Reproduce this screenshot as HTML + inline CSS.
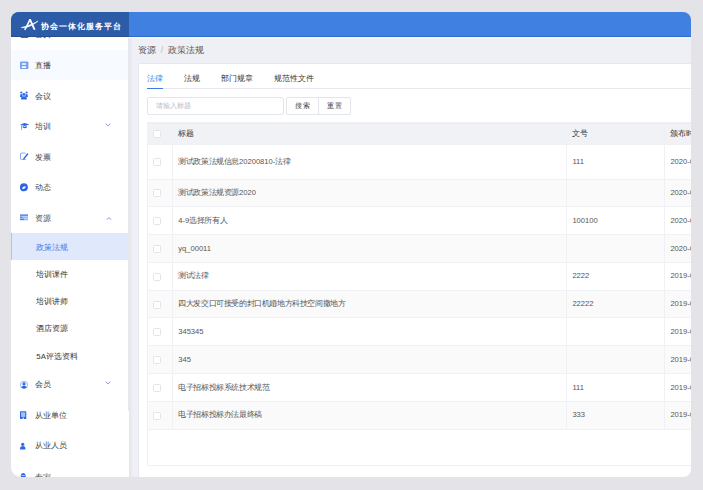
<!DOCTYPE html>
<html><head><meta charset="utf-8">
<style>
*{box-sizing:border-box;margin:0;padding:0}
html,body{width:703px;height:490px;overflow:hidden;background:#e4e3e8;font-family:"Liberation Sans",sans-serif;}
#win{position:absolute;left:0;top:0;width:703px;height:490px;clip-path:inset(12px 12px 13px 11px round 8px 8px 8px 10px);background:#eff0f5;}
#hdr{position:absolute;left:11px;top:12px;width:680px;height:25px;background:#4080e0;box-shadow:inset 0 -1px 0 #2e6ad6;}
#hdrl{position:absolute;left:11px;top:12px;width:118px;height:25px;background:#2c5ba8;box-shadow:inset 0 -1px 0 #24508f;}
#logo{position:absolute;left:10px;top:6px;width:16px;height:13px}
#title{position:absolute;left:30px;top:1.2px;line-height:27px;font-size:8.4px;letter-spacing:1.0px;color:#fff;font-weight:bold;white-space:nowrap}
#side{position:absolute;left:11px;top:37px;width:118px;height:440px;background:#fff;overflow:hidden}
#side .ic{position:absolute;left:9px;width:10px;height:9px;line-height:0}
#side .ic svg{display:block}
#side .tx{position:absolute;left:24.2px;height:14px;line-height:14px;font-size:7.8px;color:#444;white-space:nowrap}
#side .sub{left:25.3px}
#side .ch{position:absolute;left:94px;width:6px;height:4px}
#bc{position:absolute;left:138px;top:43px;font-size:8.5px;color:#555;line-height:14px;white-space:nowrap}
#card{position:absolute;left:138.7px;top:63px;width:600px;height:460px;background:#fff;border-radius:2px}
.tab{position:absolute;top:10px;font-size:8px;line-height:12px;color:#333;white-space:nowrap}
#tabline{position:absolute;left:8.3px;top:25px;width:600px;height:1px;background:#e8e8ee}
#tabact{position:absolute;left:8.3px;top:24.5px;width:16px;height:1.5px;background:#3d7ae6}
#inp{position:absolute;left:8.4px;top:33.9px;width:136.8px;height:18px;border:1px solid #e3e5ea;border-radius:2px;font-size:7.2px;color:#b8bcc4;line-height:15.6px;padding-left:8px}
.btn{position:absolute;top:33.9px;width:32.5px;height:18px;border:1px solid #e3e5ea;font-size:7px;color:#444;line-height:16px;text-align:center;letter-spacing:1px;padding-left:1px}
.tr{position:absolute;left:8.3px;width:600px;border-bottom:1px solid #f0f1f5}
.th{background:#f1f2f6}
.vl{position:absolute;width:1px;background:#f0f1f5}
.td{position:absolute;height:12px;line-height:12px;font-size:7.6px;color:#555;white-space:nowrap}
.hd{color:#333}
.cj{letter-spacing:-0.4px}
.cb{position:absolute;width:8px;height:8px;border:1px solid #e2e4ea;border-radius:1.5px;background:#fff}
#tblbot{position:absolute;left:8.3px;top:366px;width:600px;height:36.8px;border:1px solid #f0f1f5;border-top:none}
#tblleft{position:absolute;left:8.3px;top:59px;width:1px;height:343px;background:#f0f1f5}
</style></head><body>
<div id="win">
  <div id="hdr"></div>
  <div id="hdrl">
    <svg style="position:absolute;left:0;top:0" width="118" height="25" viewBox="0 0 118 25"><path d="M17.9 7.0 L19.8 7.0 L24.6 17.7 L22.6 17.7 Z" fill="#fff"/><path d="M18.9 7.6 Q16.8 12.6 13.7 17.8" stroke="#fff" stroke-width="1.5" fill="none"/><path d="M10.2 15.5 C 15 16.2, 21 14.3, 27.1 9.0 C 21.5 12.2, 15.5 14.4, 10.2 15.5 Z" stroke="#fff" stroke-width="0.6" fill="#fff" stroke-linejoin="round"/></svg>
    <div id="title">协会一体化服务平台</div>
  </div>
  <div id="side">
<div style="position:absolute;left:0;top:12.50px;width:116.5px;height:30.7px;background:#f7faff"></div>
<div class="ic" style="top:-7.60px"><svg width="9" height="9" viewBox="0 0 9 9"><rect x="0.5" y="0" width="8" height="9" rx="1" fill="#2f66e6"/></svg></div>
<div class="tx" style="top:-9.10px">首页</div>
<div class="ic" style="top:23.70px"><svg width="9" height="9" viewBox="0 0 9 9"><rect x="0" y="0.4" width="8.4" height="7.7" rx="1.2" fill="#76a0f0"/><rect x="1.8" y="2.2" width="4.3" height="1.6" rx="0.3" fill="#fff"/><rect x="1.8" y="5.3" width="4.3" height="1.6" rx="0.3" fill="#fff"/></svg></div>
<div class="tx" style="top:22.20px">直播</div>
<div class="ic" style="top:54.20px"><svg width="9" height="9" viewBox="0 0 9 9"><circle cx="1.3" cy="1.5" r="1.1" fill="#2f66e6"/><circle cx="6.6" cy="1.5" r="1.1" fill="#2f66e6"/><circle cx="3.95" cy="3.4" r="1.45" fill="#2f66e6"/><path d="M0 5.4 Q0 3.1 1.3 3.1 Q2.6 3.1 2.6 4.9 V5.9 H0Z M7.9 5.4 Q7.9 3.1 6.6 3.1 Q5.3 3.1 5.3 4.9 V5.9 H7.9Z" fill="#2f66e6"/><path d="M1.1 8.4 V6.8 Q1.1 5.3 3.95 5.3 Q6.8 5.3 6.8 6.8 V8.4Z" fill="#2f66e6"/></svg></div>
<div class="tx" style="top:52.70px">会议</div>
<div class="ic" style="top:84.70px"><svg width="10" height="9" viewBox="0 0 10 9"><path d="M0.1 2.5 L4.7 0.9 L9.3 2.5 L4.7 3.9Z" fill="#2f66e6"/><path d="M2.6 4.1 Q4.8 5.4 7.0 4.1 V5.3 Q4.8 7.0 2.6 5.3Z" fill="#2f66e6"/><path d="M1.6 2.6 V8.1" stroke="#6d98ef" stroke-width="0.85"/></svg></div>
<div class="tx" style="top:83.20px">培训</div>
<div class="ch" style="top:86.30px;left:94px"><svg width="6" height="3.5" viewBox="0 0 5.5 3" style="display:block"><path d="M0.5 0.5 L2.7 2.5 L4.9 0.5" stroke="#8895ee" stroke-width="0.9" fill="none"/></svg></div>
<div class="ic" style="top:115.20px"><svg width="9" height="9" viewBox="0 0 9 9"><path d="M5.6 1.1 H1.3 Q0.5 1.1 0.5 1.9 V6.7 Q0.5 7.5 1.3 7.5 H5.8" stroke="#7a9ff0" stroke-width="0.9" fill="none"/><path d="M3.9 6.6 L7.6 2.0" stroke="#2f66e6" stroke-width="1.5" stroke-linecap="round"/></svg></div>
<div class="tx" style="top:113.70px">发票</div>
<div class="ic" style="top:145.70px"><svg width="9" height="9" viewBox="0 0 9 9"><circle cx="3.9" cy="4.3" r="3.95" fill="#2f66e6"/><ellipse cx="3.95" cy="4.6" rx="1.9" ry="0.95" transform="rotate(-30 3.95 4.6)" fill="#fff"/></svg></div>
<div class="tx" style="top:144.20px">动态</div>
<div class="ic" style="top:176.20px"><svg width="9" height="9" viewBox="0 0 9 9"><rect x="0" y="0.8" width="8" height="7.2" fill="#dde8fc"/><rect x="0" y="1.6" width="8" height="1.1" fill="#2f66e6"/><rect x="0" y="3.6" width="2.6" height="1.1" fill="#2f66e6"/><rect x="2.6" y="3.6" width="5.4" height="1.1" fill="#86aaf3"/><rect x="0" y="5.6" width="4" height="1.2" fill="#2f66e6"/><rect x="4" y="5.6" width="4" height="1.2" fill="#86aaf3"/></svg></div>
<div class="tx" style="top:174.70px">资源</div>
<div class="ch" style="top:179.50px;left:94.8px"><svg width="6" height="3.5" viewBox="0 0 5.5 3" style="display:block"><path d="M0.5 2.5 L2.7 0.5 L4.9 2.5" stroke="#8895ee" stroke-width="0.9" fill="none"/></svg></div>
<div class="ic" style="top:342.75px"><svg width="9" height="9" viewBox="0 0 9 9"><circle cx="4" cy="4.95" r="3.6" fill="none" stroke="#7a9cf0" stroke-width="0.75"/><circle cx="4" cy="3.9" r="1.55" fill="#2f66e6"/><path d="M1.1 7.2 Q1.8 5.7 4 5.7 Q6.2 5.7 6.9 7.2 Q4 9.9 1.1 7.2Z" fill="#2f66e6"/></svg></div>
<div class="tx" style="top:341.25px">会员</div>
<div class="ch" style="top:344.35px;left:94px"><svg width="6" height="3.5" viewBox="0 0 5.5 3" style="display:block"><path d="M0.5 0.5 L2.7 2.5 L4.9 0.5" stroke="#8895ee" stroke-width="0.9" fill="none"/></svg></div>
<div class="ic" style="top:373.25px"><svg width="9" height="9" viewBox="0 0 9 9"><rect x="0" y="1.2" width="6.3" height="7.7" rx="0.6" fill="#2f66e6"/><rect x="1.1" y="2.3" width="4.1" height="4.6" fill="#a9c2f5"/><rect x="2.6" y="7.6" width="1.2" height="1.3" fill="#fff"/></svg></div>
<div class="tx" style="top:371.75px">从业单位</div>
<div class="ic" style="top:403.75px"><svg width="9" height="9" viewBox="0 0 9 9"><circle cx="2.75" cy="3.35" r="1.55" fill="#2f66e6"/><path d="M0.1 8.4 V7.1 Q0.1 5.0 2.75 5.0 Q5.4 5.0 5.4 7.1 V8.4Z" fill="#2f66e6"/></svg></div>
<div class="tx" style="top:402.25px">从业人员</div>
<div class="ic" style="top:435.00px"><svg width="9" height="9" viewBox="0 0 9 9"><path d="M0.8 9 V3.4 Q0.8 0.9 3.2 0.9 Q5.6 0.9 5.6 3.4 V9Z" fill="#2f66e6"/><rect x="1.6" y="3.2" width="3.2" height="0.8" fill="#fff" opacity="0.8"/></svg></div>
<div class="tx" style="top:433.50px">专家</div>
<div style="position:absolute;left:0;top:196.00px;width:117.7px;height:27.2px;background:#dfe9fb;border-left:1px solid #a8c4f4"></div>
<div class="tx sub" style="top:203.80px;color:#3f77e3">政策法规</div>
<div class="tx sub" style="top:231.00px;color:#333">培训课件</div>
<div class="tx sub" style="top:258.20px;color:#333">培训讲师</div>
<div class="tx sub" style="top:285.40px;color:#333">酒店资源</div>
<div class="tx sub" style="top:312.60px;color:#333">5A评选资料</div>
  </div>
  <div style="position:absolute;left:129px;top:37px;width:4px;height:440px;background:linear-gradient(to right,#e3e4ea,#eff0f5)"></div>
  <div style="position:absolute;left:128px;top:38px;width:1px;height:373px;background:#e8e9ef"></div>
  <div style="position:absolute;left:129px;top:37px;width:562px;height:2px;background:linear-gradient(#fafaf7,#f3f3f5)"></div>
  <div id="bc">资源 &nbsp;<span style="color:#b8bbc2">/</span>&nbsp; 政策法规</div>
  <div style="position:absolute;left:138px;top:63px;width:1px;height:420px;background:#e7e7ed"></div>
  <div id="card">
    <div style="position:absolute;left:-1px;top:0;width:600px;height:1px;background:#e7e7ed"></div>
    <div id="tabline"></div>
    <div id="tabact"></div>
    <div class="tab" style="left:8.1px;color:#3d7ae6">法律</div>
    <div class="tab" style="left:45.3px">法规</div>
    <div class="tab" style="left:82.3px">部门规章</div>
    <div class="tab" style="left:135.1px">规范性文件</div>
    <div id="inp">请输入标题</div>
    <div class="btn" style="left:147.7px;border-radius:2px 0 0 2px">搜索</div>
    <div class="btn" style="left:179.6px;border-radius:0 2px 2px 0">重置</div>
<div class="tr th" style="top:59.00px;height:22.50px"></div>
<div style="position:absolute;left:8.3px;top:60.0px;width:600px;height:1px;background:#ebecf1"></div>
<div class="cb" style="left:14.50px;top:66.75px"></div>
<div class="td hd" style="left:39.50px;top:65.05px"><span class="cj">标题</span></div>
<div class="td hd" style="left:433.70px;top:65.05px"><span class="cj">文号</span></div>
<div class="td hd" style="left:531.70px;top:65.05px"><span class="cj">颁布时间</span></div>
<div class="tr" style="top:82.00px;height:34.50px;background:#fff"></div>
<div class="cb" style="left:14.50px;top:95.25px"></div>
<div class="td" style="left:39.50px;top:92.95px"><span class="cj">测试政策法规信息</span>20200810-<span class="cj">法律</span></div>
<div class="td" style="left:433.70px;top:92.95px">111</div>
<div class="td" style="left:531.70px;top:92.95px">2020-0</div>
<div class="tr" style="top:116.50px;height:27.78px;background:#fafafa"></div>
<div class="cb" style="left:14.50px;top:126.39px"></div>
<div class="td" style="left:39.50px;top:124.09px"><span class="cj">测试政策法规资源</span>2020</div>
<div class="td" style="left:531.70px;top:124.09px">2020-0</div>
<div class="tr" style="top:144.28px;height:27.78px;background:#fff"></div>
<div class="cb" style="left:14.50px;top:154.17px"></div>
<div class="td" style="left:39.50px;top:151.87px">4-9<span class="cj">选择所有人</span></div>
<div class="td" style="left:433.70px;top:151.87px">100100</div>
<div class="td" style="left:531.70px;top:151.87px">2020-0</div>
<div class="tr" style="top:172.06px;height:27.78px;background:#fafafa"></div>
<div class="cb" style="left:14.50px;top:181.95px"></div>
<div class="td" style="left:39.50px;top:179.65px">yq_00011</div>
<div class="td" style="left:531.70px;top:179.65px">2020-0</div>
<div class="tr" style="top:199.84px;height:27.78px;background:#fff"></div>
<div class="cb" style="left:14.50px;top:209.73px"></div>
<div class="td" style="left:39.50px;top:207.43px"><span class="cj">测试法律</span></div>
<div class="td" style="left:433.70px;top:207.43px">2222</div>
<div class="td" style="left:531.70px;top:207.43px">2019-0</div>
<div class="tr" style="top:227.62px;height:27.78px;background:#fafafa"></div>
<div class="cb" style="left:14.50px;top:237.51px"></div>
<div class="td" style="left:39.50px;top:235.21px"><span class="cj">四大发交口可接受的封口机婚地方科技空间撒地方</span></div>
<div class="td" style="left:433.70px;top:235.21px">22222</div>
<div class="td" style="left:531.70px;top:235.21px">2019-0</div>
<div class="tr" style="top:255.40px;height:27.78px;background:#fff"></div>
<div class="cb" style="left:14.50px;top:265.29px"></div>
<div class="td" style="left:39.50px;top:262.99px">345345</div>
<div class="td" style="left:531.70px;top:262.99px">2019-0</div>
<div class="tr" style="top:283.18px;height:27.78px;background:#fafafa"></div>
<div class="cb" style="left:14.50px;top:293.07px"></div>
<div class="td" style="left:39.50px;top:290.77px">345</div>
<div class="td" style="left:531.70px;top:290.77px">2019-0</div>
<div class="tr" style="top:310.96px;height:27.78px;background:#fff"></div>
<div class="cb" style="left:14.50px;top:320.85px"></div>
<div class="td" style="left:39.50px;top:318.55px"><span class="cj">电子招标投标系统技术规范</span></div>
<div class="td" style="left:433.70px;top:318.55px">111</div>
<div class="td" style="left:531.70px;top:318.55px">2019-0</div>
<div class="tr" style="top:338.74px;height:27.78px;background:#fafafa"></div>
<div class="cb" style="left:14.50px;top:348.63px"></div>
<div class="td" style="left:39.50px;top:346.33px"><span class="cj">电子招标投标办法最终稿</span></div>
<div class="td" style="left:433.70px;top:346.33px">333</div>
<div class="td" style="left:531.70px;top:346.33px">2019-0</div>
<div class="vl" style="left:33.00px;top:59.00px;height:307.02px"></div>
<div class="vl" style="left:427.20px;top:59.00px;height:307.02px"></div>
<div class="vl" style="left:525.20px;top:59.00px;height:307.02px"></div>
    <div id="tblleft"></div>
    <div id="tblbot"></div>
  </div>
</div>
</body></html>
